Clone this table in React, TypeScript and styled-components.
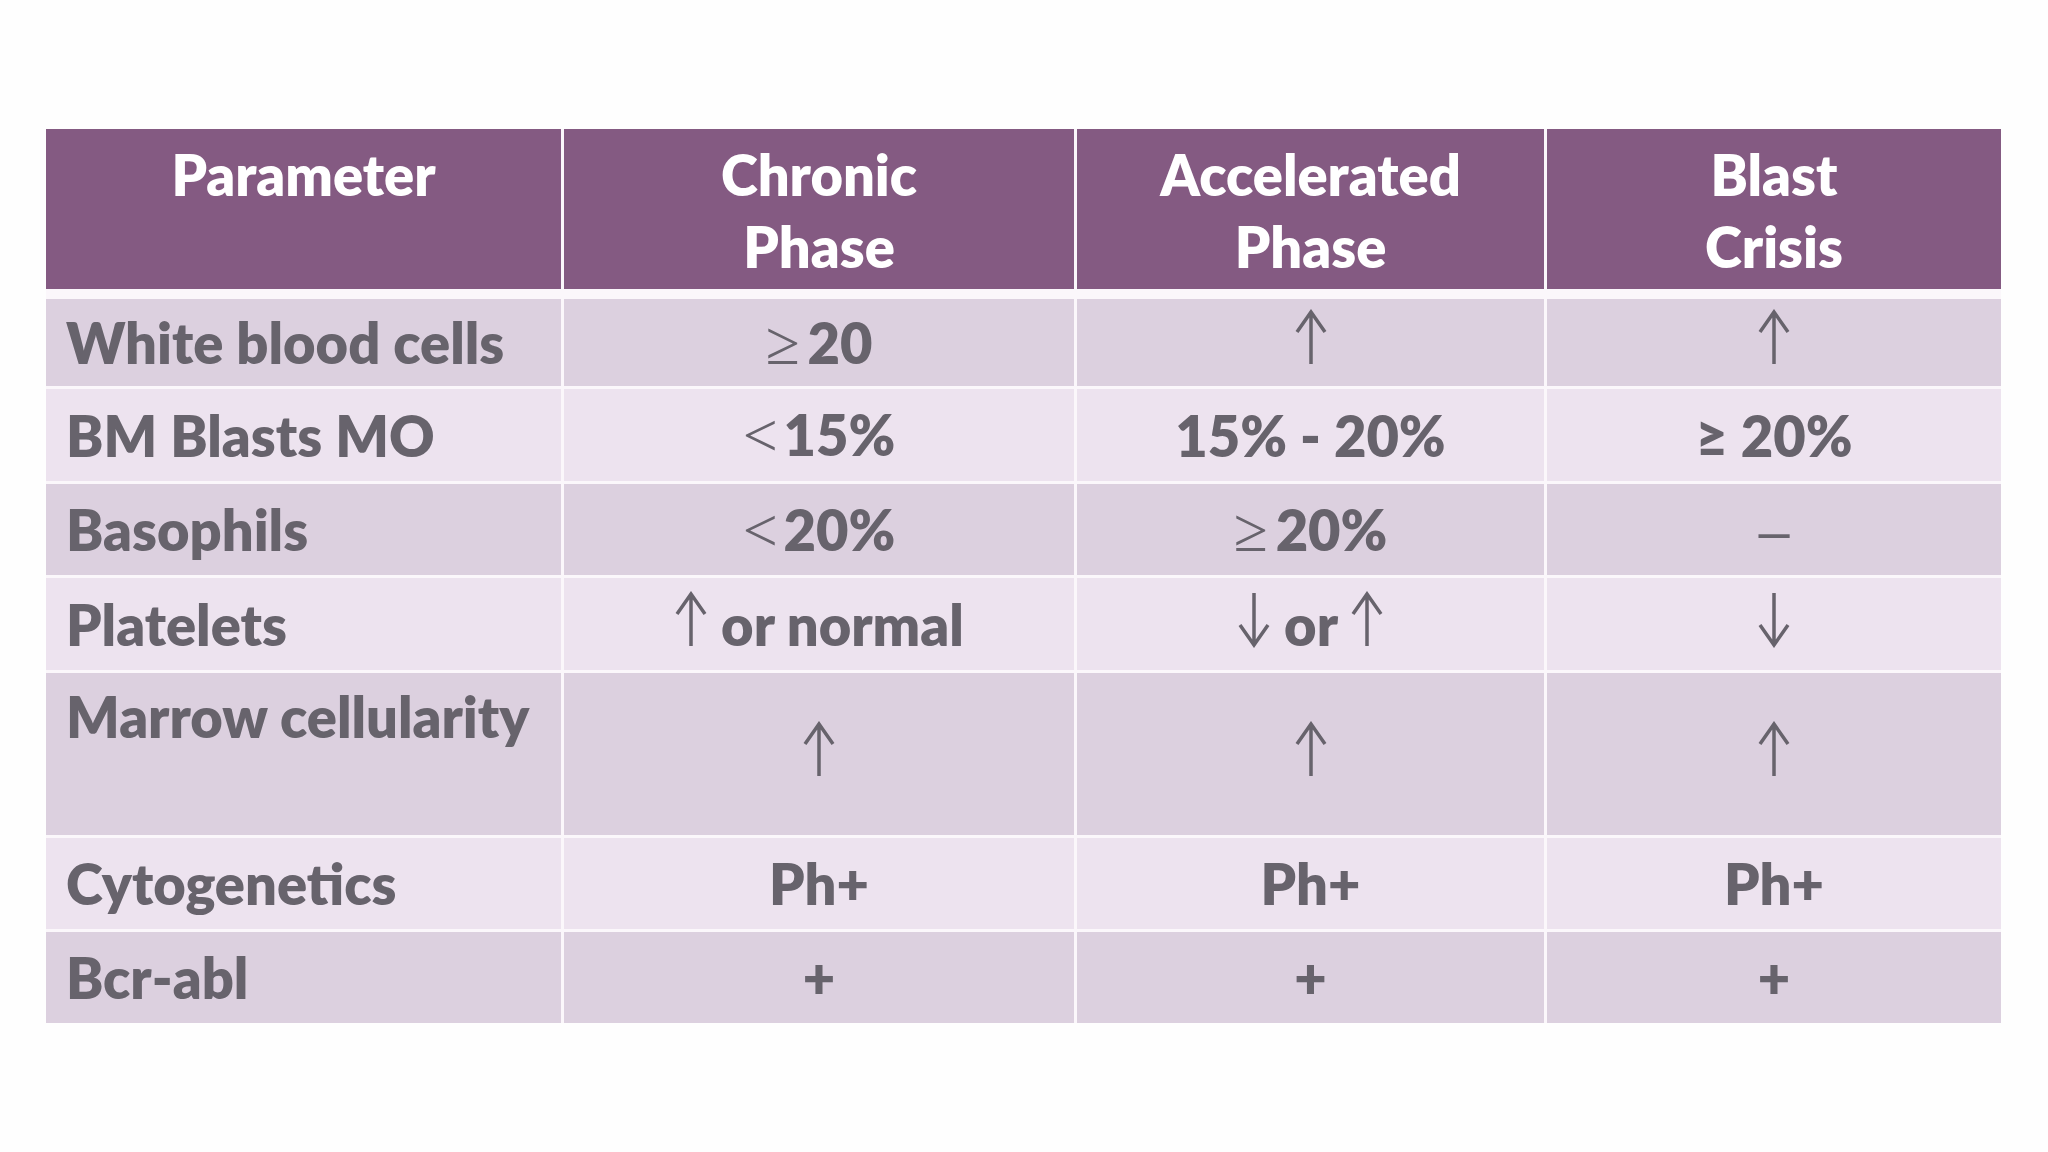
import styled, { createGlobalStyle } from "styled-components";
import type { ReactNode } from "react";

const GlobalStyle = createGlobalStyle`
  html, body {
    margin: 0;
    padding: 0;
    background: #fefefe;
  }
  body {
    font-family: Lato, "Open Sans", "Liberation Sans", sans-serif;
  }
`;

const COLS = "515px 510px 467px 454px";

const Page = styled.main`
  min-height: 100vh;
  box-sizing: border-box;
  padding: 129px 0 0 46px;
`;

const Table = styled.div`
  width: 1955px;
  display: flex;
  flex-direction: column;
  gap: 3px;
  background: #fbf7fb;
`;

const HeadRow = styled.div`
  display: grid;
  grid-template-columns: ${COLS};
  column-gap: 3px;
  height: 160px;
  margin-bottom: 7px;
`;

const HeadCell = styled.div`
  background: #845a82;
  color: #ffffff;
  font-weight: 800;
  font-size: 56px;
  line-height: 72px;
  text-align: center;
  padding-top: 10px;
  box-sizing: border-box;
`;

const Row = styled.div<{ $height: number; $tone: "dark" | "light" }>`
  display: grid;
  grid-template-columns: ${COLS};
  column-gap: 3px;
  height: ${(p) => p.$height}px;
  --cell-bg: ${(p) => (p.$tone === "dark" ? "#dcd0df" : "#ede3ef")};
`;

const Cell = styled.div<{ $label?: boolean; $top?: boolean }>`
  background: var(--cell-bg);
  color: #67636c;
  font-weight: 800;
  font-size: 56px;
  line-height: 67px;
  white-space: nowrap;
  display: flex;
  align-items: ${(p) => (p.$top ? "flex-start" : "center")};
  justify-content: ${(p) => (p.$label ? "flex-start" : "center")};
  padding: ${(p) => (p.$top ? "10px" : "0")} 0 0 ${(p) => (p.$label ? "20px" : "0")};
  box-sizing: border-box;
`;

// thin math signs, as in the slide's symbol font
const Sign = styled.span<{ $gap: number }>`
  font-family: "Liberation Serif", "DejaVu Serif", serif;
  font-weight: 400;
  font-size: 62px;
  margin-right: ${(p) => p.$gap}px;
`;

const Dash = styled.span`
  font-family: "Liberation Sans", sans-serif;
  font-weight: 400;
  font-size: 56px;
`;

const ArrowSvg = styled.svg<{ $down?: boolean }>`
  display: inline-block;
  vertical-align: ${(p) => (p.$down ? "-2px" : "baseline")};
  transform: ${(p) => (p.$down ? "rotate(180deg)" : "none")};
`;

const Arrow = ({ down }: { down?: boolean }) => (
  <ArrowSvg
    $down={down}
    width={34}
    height={55}
    viewBox="0 0 34 55"
    role="img"
    aria-label={down ? "↓" : "↑"}
  >
    <path
      d="M17 3 V55 M3 23 L17 3 L31 23"
      fill="none"
      stroke="#67636c"
      strokeWidth={3.5}
      strokeLinejoin="miter"
    />
  </ArrowSvg>
);

type RowData = {
  label: string;
  height: number;
  tone: "dark" | "light";
  top?: boolean;
  values: ReactNode[];
};

const rows: RowData[] = [
  {
    label: "White blood cells",
    height: 87,
    tone: "dark",
    values: [
      <span><Sign $gap={8}>≥</Sign>20</span>,
      <Arrow />,
      <Arrow />,
    ],
  },
  {
    label: "BM Blasts MO",
    height: 92,
    tone: "light",
    values: [
      <span><Sign $gap={6}>&lt;</Sign>15%</span>,
      <span>15% - 20%</span>,
      <span>≥ 20%</span>,
    ],
  },
  {
    label: "Basophils",
    height: 91,
    tone: "dark",
    values: [
      <span><Sign $gap={6}>&lt;</Sign>20%</span>,
      <span><Sign $gap={8}>≥</Sign>20%</span>,
      <Dash>–</Dash>,
    ],
  },
  {
    label: "Platelets",
    height: 92,
    tone: "light",
    values: [
      <span><Arrow /> or normal</span>,
      <span><Arrow down /> or <Arrow /></span>,
      <Arrow down />,
    ],
  },
  {
    label: "Marrow cellularity",
    height: 162,
    tone: "dark",
    top: true,
    values: [<Arrow />, <Arrow />, <Arrow />],
  },
  {
    label: "Cytogenetics",
    height: 91,
    tone: "light",
    values: ["Ph+", "Ph+", "Ph+"],
  },
  {
    label: "Bcr-abl",
    height: 91,
    tone: "dark",
    values: ["+", "+", "+"],
  },
];

export default function App() {
  return (
    <Page>
      <GlobalStyle />
      <Table>
        <HeadRow>
          <HeadCell>Parameter</HeadCell>
          <HeadCell>
            Chronic
            <br />
            Phase
          </HeadCell>
          <HeadCell>
            Accelerated
            <br />
            Phase
          </HeadCell>
          <HeadCell>
            Blast
            <br />
            Crisis
          </HeadCell>
        </HeadRow>
        {rows.map((row) => (
          <Row key={row.label} $height={row.height} $tone={row.tone}>
            <Cell $label $top={row.top}>
              {row.label}
            </Cell>
            {row.values.map((v, i) => (
              <Cell key={i}>
                <span>{v}</span>
              </Cell>
            ))}
          </Row>
        ))}
      </Table>
    </Page>
  );
}
